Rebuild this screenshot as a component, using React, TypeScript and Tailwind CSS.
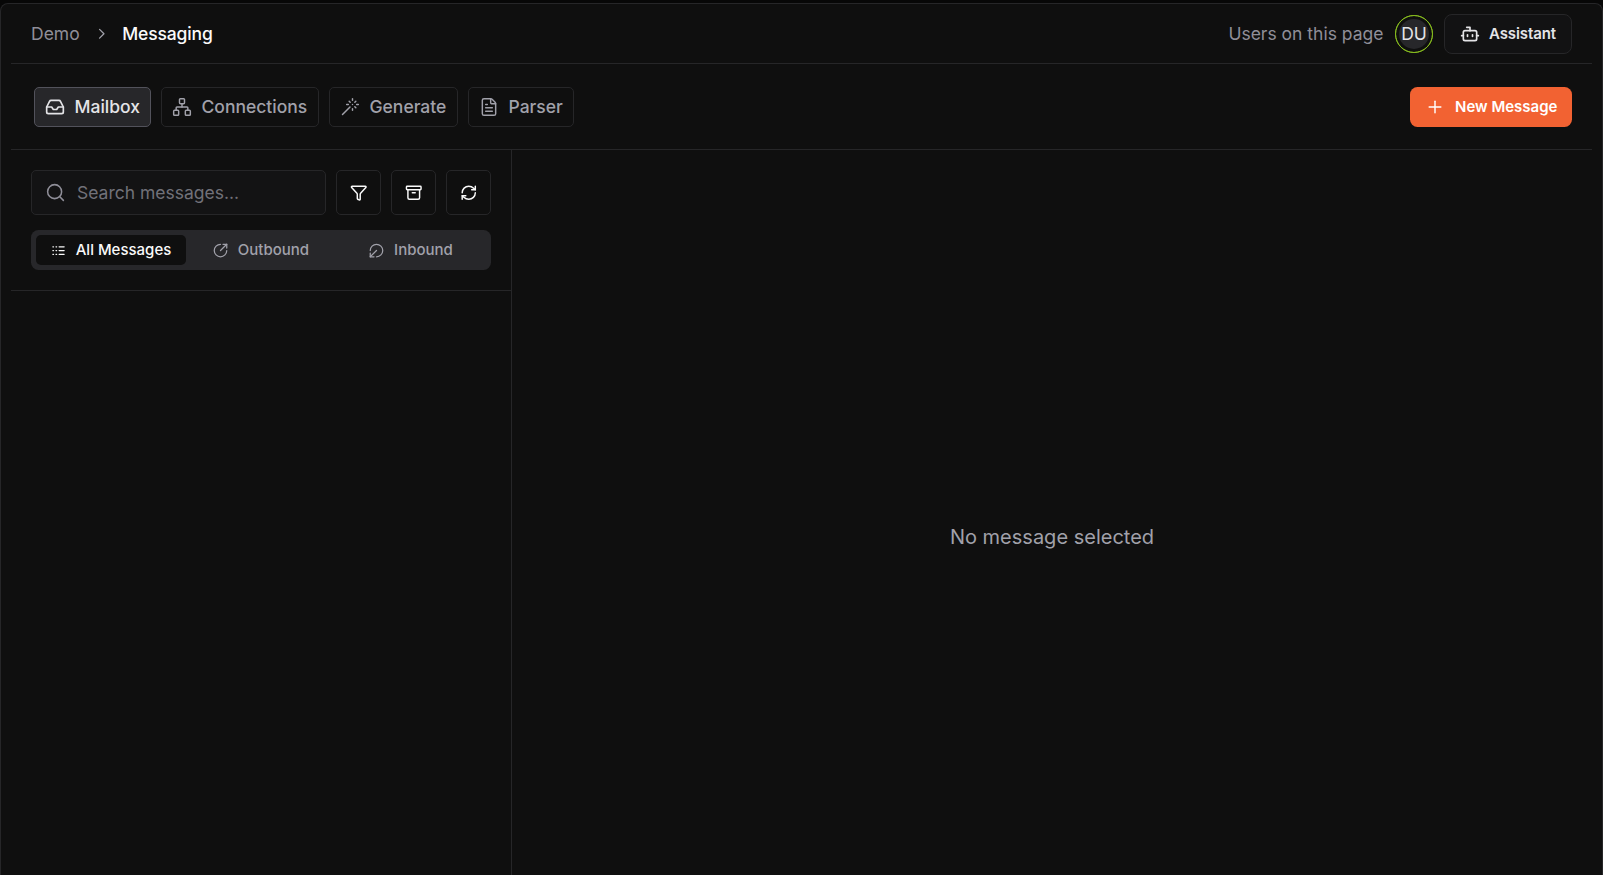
import React from "react";
import {
  Archive,
  Bot,
  ChevronRight,
  CircleArrowOutDownLeft,
  CircleArrowOutUpRight,
  FileText,
  Funnel,
  Inbox,
  Network,
  Plus,
  RefreshCw,
  Search,
  Wand,
} from "lucide-react";
import clsx from "clsx";

function LogsIcon({ className, strokeWidth = 2 }: { className?: string; strokeWidth?: number | string }) {
  return (
    <svg
      className={className}
      viewBox="0 0 24 24"
      fill="none"
      stroke="currentColor"
      strokeWidth={strokeWidth}
      strokeLinecap="round"
      strokeLinejoin="round"
    >
      <path d="M13 12h8M13 18h8M13 6h8M3 12h1M3 18h1M3 6h1M8 12h1M8 18h1M8 6h1" />
    </svg>
  );
}

const navItems = [
  { label: "Mailbox", icon: Inbox, width: "w-[117px]", active: true },
  { label: "Connections", icon: Network, width: "w-[158px]" },
  { label: "Generate", icon: Wand, width: "w-[129px]" },
  { label: "Parser", icon: FileText, width: "w-[106px]" },
];

const filters = [
  { label: "All Messages", icon: LogsIcon, active: true },
  { label: "Outbound", icon: CircleArrowOutUpRight },
  { label: "Inbound", icon: CircleArrowOutDownLeft },
];

const actions = [
  { label: "Filter", icon: Funnel },
  { label: "Archive", icon: Archive },
  { label: "Refresh", icon: RefreshCw },
];

function Header() {
  return (
    <header className="flex h-[60px] shrink-0 items-center justify-between border-b border-[#262628] px-5">
      <nav className="flex items-center text-[17.5px]">
        <span className="pt-0.5 text-[#8f8e98]">Demo</span>
        <ChevronRight className="mr-3 ml-[13px] size-[17.5px] text-[#a1a1aa]" strokeWidth={1.75} />
        <span className="pt-0.5 font-medium tracking-[-0.12px] text-[#fafafa]">Messaging</span>
      </nav>
      <div className="flex items-center">
        <span className="mr-[11.5px] pt-0.5 text-[17.5px] text-[#8f8e98]">Users on this page</span>
        <div className="mr-[11px] flex size-[38px] items-center justify-center rounded-full border-[1.5px] border-[#84b81e] outline-[0.5px] -outline-offset-1 outline-[#84b81e]">
          <div className="flex size-[30px] items-center justify-center rounded-full bg-[#27272a] pt-px text-[17.5px] text-[#e4e4e7]">
            DU
          </div>
        </div>
        <button className="flex h-10 w-32 items-center rounded-lg border border-[#262628] bg-[#121213] pl-[15px] text-[15px] font-semibold tracking-[-0.1px] text-[#e4e4e7]">
          <Bot className="mr-[9px] size-5" strokeWidth={2} />
          <span className="pt-px">Assistant</span>
        </button>
      </div>
    </header>
  );
}

function Toolbar() {
  return (
    <div className="flex h-[86px] shrink-0 items-center justify-between border-b border-[#262628] pr-5 pl-[23px]">
      <div className="flex gap-2.5">
        {navItems.map(({ label, icon: Icon, width, active }) => (
          <button
            key={label}
            className={clsx(
              "flex h-10 items-center gap-2.5 rounded-[5px] border pl-2.5 text-[17.5px] font-medium",
              width,
              active ? "border-[#52525b] bg-[#27272a] text-[#e4e4e7]" : "border-[#262628] text-[#a1a1aa]"
            )}
          >
            <Icon className="size-5 shrink-0" strokeWidth={active ? 2 : 1.75} />
            <span className="-ml-[0.5px] pt-0.5">{label}</span>
          </button>
        ))}
      </div>
      <button className="flex h-10 w-[162px] items-center rounded-[7.5px] bg-[#f26232] pl-[15px] text-[15px] font-semibold text-white">
        <Plus className="mr-2.5 size-5" strokeWidth={1.75} />
        <span className="pt-px">New Message</span>
      </button>
    </div>
  );
}

function Sidebar() {
  return (
    <aside className="flex w-[501px] shrink-0 flex-col border-r border-[#262628]">
      <div className="border-b border-[#262628] px-5 pt-5 pb-5">
        <div className="flex gap-2.5">
          <div className="flex h-[45px] w-[295px] items-center rounded-[5px] border border-[#262628] bg-[#131314] pl-[13px]">
            <Search className="mr-[11px] size-[21px] shrink-0 text-[#8f8e98]" strokeWidth={1.75} />
            <input
              className="w-full bg-transparent pt-0.5 text-[17.5px] outline-none placeholder:text-[#717179]"
              placeholder="Search messages..."
            />
          </div>
          {actions.map(({ label, icon: Icon }) => (
            <button
              key={label}
              aria-label={label}
              className="flex size-[45px] items-center justify-center rounded-[5px] border border-[#262628] text-[#fafafa]"
            >
              <Icon className="size-[17.5px]" strokeWidth={2} />
            </button>
          ))}
        </div>
        <div className="mt-[15px] flex h-10 w-[460px] items-center rounded-[7.5px] bg-[#27272a] px-[5px]">
          {filters.map(({ label, icon: Icon, active }) => (
            <button
              key={label}
              className={clsx(
                "flex h-[30px] flex-1 items-center justify-center gap-2.5 rounded-[5px] text-[15px] font-medium",
                active ? "bg-[#0f0f0f] text-[#fafafa]" : "text-[#a1a1aa]"
              )}
            >
              <Icon className="size-[15px]" strokeWidth={2} />
              {label}
            </button>
          ))}
        </div>
      </div>
    </aside>
  );
}

export default function App() {
  return (
    <div className="h-screen overflow-hidden bg-[#070707] pt-[3px] font-['Inter',sans-serif] antialiased">
      <div className="flex h-full flex-col rounded-t-lg border-x border-t border-[#262628] bg-[#0f0f0f] px-2.5">
        <Header />
        <Toolbar />
        <main className="flex min-h-0 flex-1">
          <Sidebar />
          <section className="flex flex-1 items-center justify-center pt-12 text-xl text-[#a1a1aa]">
            No message selected
          </section>
        </main>
      </div>
    </div>
  );
}
